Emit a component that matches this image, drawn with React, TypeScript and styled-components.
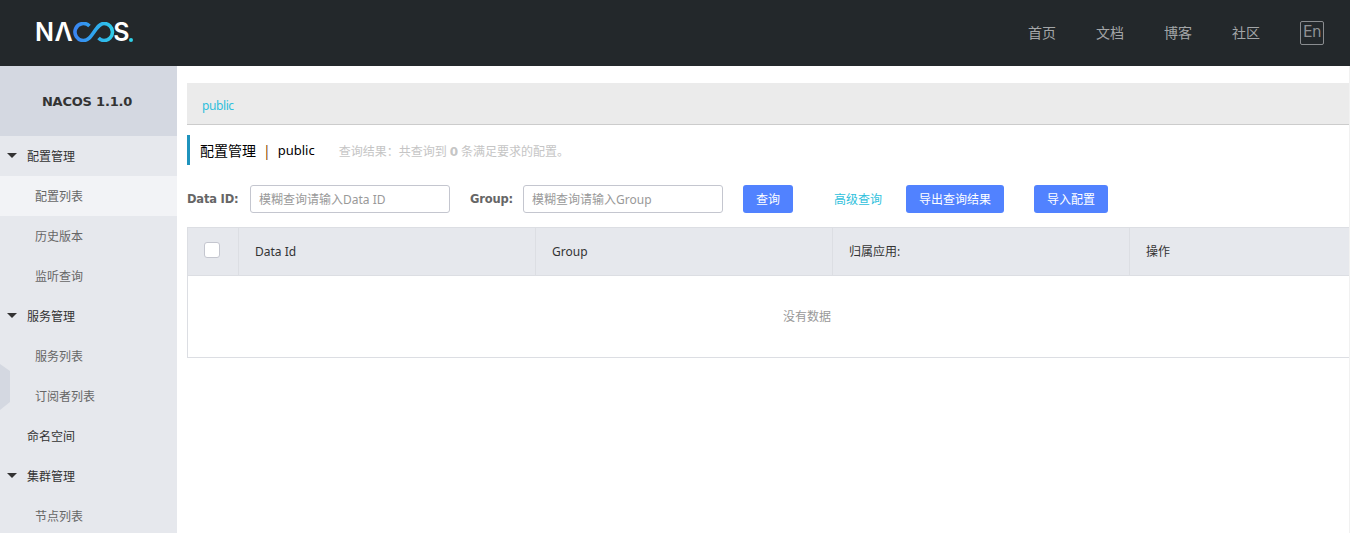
import styled, { createGlobalStyle } from "styled-components";

const CJK = `"Noto Sans CJK SC", sans-serif`;
const FONT = `"Noto Sans", "Noto Sans CJK SC", sans-serif`;
const BOLD_FONT = `"DejaVu Sans", "Noto Sans CJK SC", sans-serif`;

const GlobalStyle = createGlobalStyle`
  html, body {
    margin: 0;
    height: 100%;
    overflow: hidden;
    background: #fff;
    font-family: ${FONT};
    font-size: 12px;
  }
  * {
    box-sizing: border-box;
  }
`;

const Page = styled.div`
  width: 1350px;
  height: 533px;
  overflow: hidden;
  display: flex;
  flex-direction: column;
`;

// top bar
const Header = styled.header`
  height: 66px;
  flex: none;
  background: #23282b;
  display: flex;
  align-items: center;
  justify-content: space-between;
  padding: 0 26px 0 35px;
`;

const Logo = styled.div`
  display: flex;
  align-items: center;
  height: 20px;
  margin-top: -2px;
  color: #fff;
  font-family: "Inter", "Liberation Sans", sans-serif;
  font-size: 25px;
  font-weight: 600;
  line-height: 20px;
`;

const LogoLetters = styled.span<{ $left?: number; $spacing?: number }>`
  margin-left: ${(p) => p.$left ?? 0}px;
  letter-spacing: ${(p) => p.$spacing ?? 0}px;
`;

const LogoDot = styled.span`
  width: 4px;
  height: 4px;
  border-radius: 50%;
  background: #2fd0e8;
  align-self: flex-end;
`;

const Nav = styled.nav`
  display: flex;
  align-items: center;
`;

const NavLink = styled.a`
  width: 68px;
  padding-bottom: 3px;
  text-align: center;
  font-family: ${CJK};
  font-size: 14px;
  color: #a3a6a8;
`;

const LangButton = styled.div`
  width: 24px;
  height: 24px;
  margin-left: 20px;
  border: 1px solid #8a8d90;
  border-radius: 2px;
  color: #8f9295;
  font-family: ${BOLD_FONT};
  font-size: 15px;
  letter-spacing: -0.5px;
  line-height: 20px;
  text-align: center;
`;

const Body = styled.div`
  flex: 1;
  min-height: 0;
  display: flex;
`;

// left menu
const Sidebar = styled.aside`
  position: relative;
  width: 177px;
  flex: none;
  background: #e6e8ed;
`;

const SideTitle = styled.div`
  height: 70px;
  padding-right: 3px;
  background: #d4d8e1;
  display: flex;
  align-items: center;
  justify-content: center;
  color: #333;
  font-family: ${BOLD_FONT};
  font-size: 13px;
  font-weight: 700;
  letter-spacing: -0.2px;
`;

const MenuItem = styled.div<{ $active?: boolean; $sub?: boolean }>`
  height: 40px;
  display: flex;
  align-items: center;
  padding: 0 0 2px ${(p) => (p.$sub ? 35 : 27)}px;
  position: relative;
  background: ${(p) => (p.$active ? "#f2f3f6" : "transparent")};
  color: ${(p) => (p.$sub ? "#666" : "#333")};
  font-family: ${CJK};
  font-size: 12px;
`;

const Caret = styled.span`
  position: absolute;
  left: 7px;
  top: 17px;
  width: 0;
  height: 0;
  border-left: 5px solid transparent;
  border-right: 5px solid transparent;
  border-top: 5px solid #333;
`;

const CollapseHandle = styled.svg`
  position: absolute;
  left: 0;
  top: 298px;
`;

const Main = styled.main`
  flex: 1;
  min-width: 0;
  padding: 17px 0 0 10px;
`;

const Crumb = styled.div`
  height: 42px;
  padding: 15px 0 0 15px;
  background: #ebebeb;
  border-bottom: 1px solid #ccc;
  color: #2fbfdc;
  font-size: 12px;
  letter-spacing: -0.4px;
  line-height: 16px;
`;

const TitleRow = styled.div`
  height: 30px;
  margin-top: 10px;
  display: flex;
  align-items: center;
  border-left: 3px solid #1f93bd;
  padding-left: 10px;
`;

const TitleText = styled.span`
  color: #000;
  font-size: 14px;
  font-family: ${FONT};
`;

const TitleSpace = styled(TitleText)`
  font-size: 13px;
`;

const TitleSep = styled.span`
  color: #8a4b00;
  margin: 0 7px;
  font-size: 14px;
`;

const Summary = styled.span`
  margin-left: 24px;
  color: #c5c5c5;
  font-size: 12px;
  font-family: ${CJK};

  strong {
    font-family: ${BOLD_FONT};
    margin: 0 3px;
  }
`;

const FilterRow = styled.form`
  height: 28px;
  margin-top: 20px;
  display: flex;
  align-items: center;
`;

const FieldLabel = styled.label<{ $width: number; $left?: number }>`
  width: ${(p) => p.$width}px;
  margin-left: ${(p) => p.$left ?? 0}px;
  color: #666;
  font-family: ${BOLD_FONT};
  font-size: 11.5px;
  font-weight: 700;
  letter-spacing: -0.2px;
  white-space: nowrap;
`;

const TextInput = styled.input`
  width: 200px;
  height: 28px;
  margin-left: 12px;
  padding: 1px 8px 0;
  border: 1px solid #c4c6cf;
  border-radius: 3px;
  outline: none;
  font-family: ${FONT};
  font-size: 12px;

  &::placeholder {
    color: #999;
  }
`;

const PrimaryButton = styled.button<{ $width: number; $left: number }>`
  width: ${(p) => p.$width}px;
  height: 28px;
  margin-left: ${(p) => p.$left}px;
  padding: 0 0 2px;
  border: 0;
  border-radius: 3px;
  background: #5182ff;
  color: #fff;
  font-family: ${CJK};
  font-size: 12px;
`;

const TextLink = styled.a`
  margin-left: 41px;
  padding-bottom: 2px;
  color: #2fbfdc;
  font-family: ${CJK};
  font-size: 12px;
`;

const Table = styled.div`
  margin-top: 14px;
  width: 1240px;
  border: 1px solid #dcdee3;
`;

const HeadRow = styled.div`
  height: 48px;
  display: grid;
  grid-template-columns: 51px 297px 297px 297px 1fr;
  background: #e6e8ed;
  border-bottom: 1px solid #dcdee3;
`;

const HeadCell = styled.div`
  display: flex;
  align-items: center;
  padding: 0 0 1px 16px;
  border-right: 1px solid #dcdee3;
  color: #333;
  font-size: 12px;
  font-family: ${FONT};

  &:last-child {
    border-right: 0;
  }
`;

const CheckCell = styled(HeadCell)`
  padding: 0 0 3px 16px;
`;

const CheckBox = styled.span`
  width: 16px;
  height: 16px;
  background: #fff;
  border: 1px solid #c4c6cf;
  border-radius: 3px;
`;

const EmptyRow = styled.div`
  height: 81px;
  display: flex;
  align-items: center;
  justify-content: center;
  padding-bottom: 3px;
  color: #999;
  font-family: ${CJK};
  font-size: 12px;
`;

const EdgeLine = styled.div`
  position: fixed;
  right: 0;
  top: 66px;
  bottom: 0;
  width: 1px;
  background: #f1f1f1;
`;

const InfinityMark = () => (
  <svg width="42" height="20" viewBox="0 0 42 20" fill="none">
    <defs>
      <linearGradient id="inf" x1="0" y1="0" x2="42" y2="0" gradientUnits="userSpaceOnUse">
        <stop offset="0" stopColor="#3b82f2" />
        <stop offset="0.5" stopColor="#2fa6ee" />
        <stop offset="1" stopColor="#2fd0e8" />
      </linearGradient>
    </defs>
    <path
      d="M16.5 4A8.5 8.5 0 1 0 10.5 18.5C15 18.5 17.5 15 21 10C24.5 5 27 1.5 31 1.5A8.5 8.5 0 1 1 31 18.5C29 18.5 27 17.5 25.5 16"
      stroke="url(#inf)"
      strokeWidth="3.6"
    />
  </svg>
);

export default function App() {
  return (
    <Page>
      <GlobalStyle />
      <Header>
        <Logo>
          <LogoLetters $spacing={0.5}>NΛ</LogoLetters>
          <InfinityMark />
          <LogoLetters $left={-2}>S</LogoLetters>
          <LogoDot />
        </Logo>
        <Nav>
          <NavLink>首页</NavLink>
          <NavLink>文档</NavLink>
          <NavLink>博客</NavLink>
          <NavLink>社区</NavLink>
          <LangButton>En</LangButton>
        </Nav>
      </Header>
      <Body>
        <Sidebar>
          <SideTitle>NACOS 1.1.0</SideTitle>
          <MenuItem><Caret />配置管理</MenuItem>
          <MenuItem $sub $active>配置列表</MenuItem>
          <MenuItem $sub>历史版本</MenuItem>
          <MenuItem $sub>监听查询</MenuItem>
          <MenuItem><Caret />服务管理</MenuItem>
          <MenuItem $sub>服务列表</MenuItem>
          <MenuItem $sub>订阅者列表</MenuItem>
          <MenuItem>命名空间</MenuItem>
          <MenuItem><Caret />集群管理</MenuItem>
          <MenuItem $sub>节点列表</MenuItem>
          <CollapseHandle width="10" height="46" viewBox="0 0 10 46">
            <path d="M0 0L10 7V38L0 46Z" fill="#d4d8e1" />
          </CollapseHandle>
        </Sidebar>
        <Main>
          <Crumb>public</Crumb>
          <TitleRow>
            <TitleText>配置管理</TitleText>
            <TitleSep>|</TitleSep>
            <TitleSpace>public</TitleSpace>
            <Summary>查询结果：共查询到<strong>0</strong>条满足要求的配置。</Summary>
          </TitleRow>
          <FilterRow>
            <FieldLabel $width={51}>Data ID:</FieldLabel>
            <TextInput placeholder="模糊查询请输入Data ID" />
            <FieldLabel $width={41} $left={20}>Group:</FieldLabel>
            <TextInput placeholder="模糊查询请输入Group" />
            <PrimaryButton type="button" $width={50} $left={20}>查询</PrimaryButton>
            <TextLink>高级查询</TextLink>
            <PrimaryButton type="button" $width={98} $left={24}>导出查询结果</PrimaryButton>
            <PrimaryButton type="button" $width={74} $left={30}>导入配置</PrimaryButton>
          </FilterRow>
          <Table>
            <HeadRow>
              <CheckCell><CheckBox /></CheckCell>
              <HeadCell>Data Id</HeadCell>
              <HeadCell>Group</HeadCell>
              <HeadCell>归属应用:</HeadCell>
              <HeadCell>操作</HeadCell>
            </HeadRow>
            <EmptyRow>没有数据</EmptyRow>
          </Table>
        </Main>
      </Body>
      <EdgeLine />
    </Page>
  );
}
